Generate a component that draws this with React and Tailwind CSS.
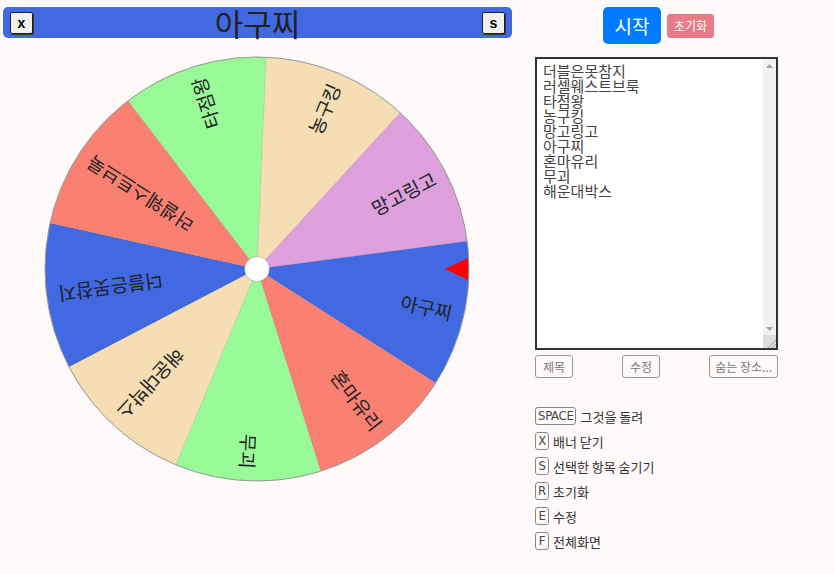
import { useState } from "react";

const items = ["더블은못참지", "러셀웨스트브룩", "타점왕", "농구킹", "망고링고", "아구찌", "혼마유리", "무괴", "해운대박스"];
const colors = ["#4169e1", "#fa8072", "#98fb98", "#f5deb3", "#dda0dd"];

const shortcuts = [
  ["SPACE", "그것을 돌려"],
  ["X", "배너 닫기"],
  ["S", "선택한 항목 숨기기"],
  ["R", "초기화"],
  ["E", "수정"],
  ["F", "전체화면"],
];

function Wheel() {
  const c = 214;
  const r = 212;
  const step = 360 / items.length;
  const pt = (deg) => {
    const a = (deg * Math.PI) / 180;
    return [c + r * Math.cos(a), c + r * Math.sin(a)];
  };

  return (
    <svg width="428" height="428" viewBox="0 0 428 428">
      {items.map((name, i) => {
        const start = 152.5 + step * i;
        const end = start + step;
        const [x1, y1] = pt(start);
        const [x2, y2] = pt(end);
        return (
          <path
            key={name}
            d={`M${c},${c} L${x1},${y1} A${r},${r} 0 0 1 ${x2},${y2} Z`}
            fill={colors[i % colors.length]}
            stroke="rgba(0,0,0,0.12)"
            strokeWidth="0.6"
          />
        );
      })}
      {items.map((name, i) => {
        const mid = 172.5 + step * i;
        return (
          <g key={name} transform={`translate(${c} ${c}) rotate(${mid})`}>
            <text
              x="200"
              y="0"
              textAnchor="end"
              dominantBaseline="central"
              fontSize="19"
              fill="#222"
              fontFamily="'Noto Sans CJK KR', sans-serif"
            >
              {name}
            </text>
          </g>
        );
      })}
      <circle cx={c} cy={c} r={r} fill="none" stroke="#9a9a9a" strokeWidth="1" />
      <circle cx={c} cy={c} r="12.5" fill="#fff" stroke="rgba(0,0,0,0.25)" strokeWidth="0.8" />
      <polygon points="402,214 425,203 425,225" fill="#ff0000" />
    </svg>
  );
}

export default function App() {
  const [list, setList] = useState(items.join("\n"));

  return (
    <div className="w-[835px] h-[574px] bg-[#fffafa] flex font-['Noto_Sans_CJK_KR',sans-serif] overflow-hidden">
      {/* left: banner + wheel */}
      <div className="w-[514px] flex flex-col items-center">
        <div className="mt-[7px] ml-[1px] w-[509px] h-[31px] rounded-[5px] bg-[#4169e1] flex items-center justify-between px-[7px]">
          <button className="w-[23px] h-[22px] bg-[#f0f0f0] border border-[#222] rounded-[2px] shadow-[1px_1px_0_#333] text-[14px] leading-none font-bold text-black font-['Liberation_Sans',sans-serif]">
            x
          </button>
          <div className="text-[31px] leading-[31px] text-[#222]">아구찌</div>
          <button className="w-[23px] h-[22px] bg-[#f0f0f0] border border-[#222] rounded-[2px] shadow-[1px_1px_0_#333] text-[14px] leading-none font-bold text-black font-['Liberation_Sans',sans-serif]">
            s
          </button>
        </div>
        <div className="mt-[17px]">
          <Wheel />
        </div>
      </div>

      {/* right: controls */}
      <div className="ml-[21px] w-[243px] flex flex-col">
        <div className="mt-[7px] flex items-center justify-center gap-[6px] pl-[4px]">
          <button className="w-[58px] h-[37px] rounded-[5px] bg-[#007bff] text-white text-[19px] leading-none">
            시작
          </button>
          <button className="w-[47px] h-[24px] rounded-[3px] bg-[#e87b86] text-white text-[12px] leading-none">
            초기화
          </button>
        </div>

        {/* list editor with a drawn scrollbar */}
        <div className="mt-[13px] w-[243px] h-[293px] bg-white border-2 border-[#333] flex">
          <textarea
            value={list}
            onChange={(e) => setList(e.target.value)}
            className="flex-1 h-full bg-white pl-[6px] pr-[2px] pt-[4px] text-[15px] leading-[15px] text-[#444] overflow-hidden resize-none outline-none"
          />
          <div className="w-[13px] h-full bg-[#f1f1f1] flex flex-col">
            <div className="h-[13px] flex items-center justify-center">
              <svg width="7" height="4" viewBox="0 0 7 4"><polygon points="0,4 3.5,0 7,4" fill="#a3a3a3" /></svg>
            </div>
            <div className="flex-1" />
            <div className="h-[13px] flex items-center justify-center">
              <svg width="7" height="4" viewBox="0 0 7 4"><polygon points="0,0 7,0 3.5,4" fill="#a3a3a3" /></svg>
            </div>
            <div className="h-[13px] bg-[#dcdcdc] flex items-end justify-end">
              <svg width="10" height="10" viewBox="0 0 10 10">
                <line x1="2" y1="10" x2="10" y2="2" stroke="#999" strokeWidth="0.8" />
                <line x1="6" y1="10" x2="10" y2="6" stroke="#999" strokeWidth="0.8" />
              </svg>
            </div>
          </div>
        </div>

        <div className="mt-[5px] flex justify-between">
          <button className="h-[23px] px-[7px] border border-[#999] rounded-[3px] text-[12px] text-[#777]">제목</button>
          <button className="h-[23px] px-[7px] border border-[#999] rounded-[3px] text-[12px] text-[#777]">수정</button>
          <button className="h-[23px] px-[5px] border border-[#999] rounded-[3px] text-[12px] text-[#777]">숨는 장소...</button>
        </div>

        <div className="mt-[29px] flex flex-col gap-[7px]">
          {shortcuts.map(([key, label]) => (
            <div key={key} className="flex items-center gap-[4px] h-[18px]">
              <span className="h-[18px] px-[2px] min-w-[14px] flex items-center justify-center border border-[#888] rounded-[3px] bg-white/40 text-[13px] text-[#444] tracking-[-0.3px] font-['Liberation_Sans_Narrow','DejaVu_Sans_Condensed',sans-serif] [font-stretch:condensed]">
                {key}
              </span>
              <span className="text-[13px] text-[#333] leading-none">{label}</span>
            </div>
          ))}
        </div>
      </div>
    </div>
  );
}
